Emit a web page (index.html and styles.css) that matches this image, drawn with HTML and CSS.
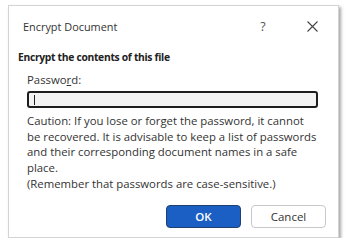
FILE: index.html
```html
<!DOCTYPE html>
<html>
<head>
<meta charset="utf-8">
<link rel="stylesheet" href="styles.css">
</head>
<body>
<div class="dialog">
  <div class="titlebar">
    <span class="title">Encrypt Document</span>
    <span class="help">?</span>
    <span class="close"><svg width="11" height="11" viewBox="0 0 11 11"><path d="M0.5 0.5 L10.5 10.5 M10.5 0.5 L0.5 10.5" stroke="#444" stroke-width="1.1" fill="none"/></svg></span>
  </div>
  <div class="heading">Encrypt the contents of this file</div>
  <div class="body">
    <div class="label">Passwo<u>r</u>d:</div>
    <div class="input"><span class="caret"></span></div>
    <div class="note">Caution: If you lose or forget the password, it cannot<br>be recovered. It is advisable to keep a list of passwords and their corresponding document names in a safe place.<br>(Remember that passwords are case-sensitive.)</div>
  </div>
  <div class="buttons">
    <div class="btn ok">OK</div>
    <div class="btn cancel">Cancel</div>
  </div>
</div>
</body>
</html>
```
FILE: styles.css
```css
html, body {
  margin: 0;
  padding: 0;
  background: #ffffff;
}
body {
  font-family: "Open Sans", "Noto Sans", sans-serif;
  color: #2b2b2b;
}
.dialog {
  box-sizing: border-box;
  margin: 5px 0 0 8px;
  width: 331px;
  height: 233px;
  border: 1px solid #d4d4d4;
  background: #fff;
  box-shadow: 2px 2px 3px rgba(0,0,0,0.35);
  display: flex;
  flex-direction: column;
}
.titlebar {
  height: 40px;
  display: flex;
  align-items: center;
  padding-left: 14px;
  font-size: 10.9px;
  color: #333;
}
.title {
  flex: 1;
}
.help {
  width: 20px;
  text-align: center;
  color: #555;
  font-size: 12.5px;
  margin-right: 34px;
}
.close {
  width: 11px;
  height: 11px;
  margin-right: 20px;
  display: flex;
}
.heading {
  margin-top: 3px;
  padding-left: 9px;
  font-size: 10.3px;
  letter-spacing: -0.3px;
  font-weight: bold;
  line-height: 16px;
  color: #222;
}
.body {
  padding-left: 18px;
  font-size: 11.35px;
  line-height: 15.7px;
  color: #333;
}
.label {
  margin-top: 7px;
  line-height: 16px;
}
.label u {
  text-underline-offset: 1px;
}
.input {
  box-sizing: border-box;
  margin-top: 3px;
  width: 291px;
  height: 17px;
  border: 2px solid #1e1e1e;
  border-radius: 3px;
  background: #f3f3f3;
  display: flex;
  align-items: center;
  padding-left: 5px;
}
.caret {
  width: 1px;
  height: 10px;
  background: #222;
}
.note {
  margin-top: 5px;
  max-width: 295px;
}
.buttons {
  display: flex;
  justify-content: flex-end;
  gap: 10px;
  padding-right: 12px;
  margin-top: 13px;
}
.btn {
  box-sizing: border-box;
  width: 75px;
  height: 23px;
  border-radius: 4px;
  display: flex;
  align-items: center;
  justify-content: center;
  font-size: 11.5px;
}
.ok {
  background: #1b5fc5;
  border: 1.5px solid #20406e;
  color: #fff;
  font-weight: 600;
}
.cancel {
  background: #fff;
  border: 1px solid #c9c9c9;
  color: #333;
}
```
